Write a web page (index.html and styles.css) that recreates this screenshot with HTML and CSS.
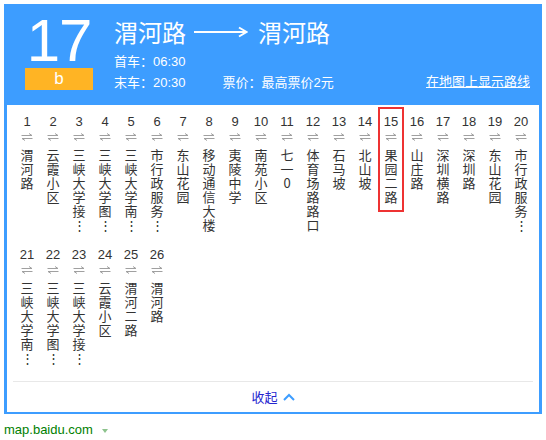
FILE: index.html
```html
<!DOCTYPE html>
<html lang="zh-CN">
<head>
<meta charset="utf-8">
<title>17路公交</title>
<link rel="stylesheet" href="styles.css">
</head>
<body>
<div class="card">
  <div class="head">
    <div class="line-no">
      <div class="num">17</div>
      <div class="badge">b</div>
    </div>
    <div class="info">
      <div class="title">
        <span>渭河路</span>
        <svg class="long-arrow" width="54" height="12" viewBox="0 0 54 12"><path d="M0 6H51" stroke="#fff" stroke-width="2" fill="none"/><path d="M45 1.5L52.5 6L45 10.5" stroke="#fff" stroke-width="2" fill="none"/></svg>
        <span>渭河路</span>
      </div>
      <div class="meta">首车<span class="colon">：</span>06:30</div>
      <div class="meta meta-row">
        <span>末车<span class="colon">：</span>20:30</span>
        <span class="price">票价<span class="colon">：</span>最高票价2元</span>
        <a class="maplink" href="#">在地图上显示路线</a>
      </div>
    </div>
  </div>
  <div class="body">
    <ul class="stops">
      <li class="stop"><span class="no">1</span><svg class="dir" width="12" height="8" viewBox="0 0 12 8"><path d="M0.5 2.5H11L8 0.5M11.5 5.5H1L4 7.5" stroke="#a0a0a0" stroke-width="1" fill="none"/></svg><span class="name">渭河路</span></li>
      <li class="stop"><span class="no">2</span><svg class="dir" width="12" height="8" viewBox="0 0 12 8"><path d="M0.5 2.5H11L8 0.5M11.5 5.5H1L4 7.5" stroke="#a0a0a0" stroke-width="1" fill="none"/></svg><span class="name">云霞小区</span></li>
      <li class="stop"><span class="no">3</span><svg class="dir" width="12" height="8" viewBox="0 0 12 8"><path d="M0.5 2.5H11L8 0.5M11.5 5.5H1L4 7.5" stroke="#a0a0a0" stroke-width="1" fill="none"/></svg><span class="name">三峡大学接⋮</span></li>
      <li class="stop"><span class="no">4</span><svg class="dir" width="12" height="8" viewBox="0 0 12 8"><path d="M0.5 2.5H11L8 0.5M11.5 5.5H1L4 7.5" stroke="#a0a0a0" stroke-width="1" fill="none"/></svg><span class="name">三峡大学图⋮</span></li>
      <li class="stop"><span class="no">5</span><svg class="dir" width="12" height="8" viewBox="0 0 12 8"><path d="M0.5 2.5H11L8 0.5M11.5 5.5H1L4 7.5" stroke="#a0a0a0" stroke-width="1" fill="none"/></svg><span class="name">三峡大学南⋮</span></li>
      <li class="stop"><span class="no">6</span><svg class="dir" width="12" height="8" viewBox="0 0 12 8"><path d="M0.5 2.5H11L8 0.5M11.5 5.5H1L4 7.5" stroke="#a0a0a0" stroke-width="1" fill="none"/></svg><span class="name">市行政服务⋮</span></li>
      <li class="stop"><span class="no">7</span><svg class="dir" width="12" height="8" viewBox="0 0 12 8"><path d="M0.5 2.5H11L8 0.5M11.5 5.5H1L4 7.5" stroke="#a0a0a0" stroke-width="1" fill="none"/></svg><span class="name">东山花园</span></li>
      <li class="stop"><span class="no">8</span><svg class="dir" width="12" height="8" viewBox="0 0 12 8"><path d="M0.5 2.5H11L8 0.5M11.5 5.5H1L4 7.5" stroke="#a0a0a0" stroke-width="1" fill="none"/></svg><span class="name">移动通信大楼</span></li>
      <li class="stop"><span class="no">9</span><svg class="dir" width="12" height="8" viewBox="0 0 12 8"><path d="M0.5 2.5H11L8 0.5M11.5 5.5H1L4 7.5" stroke="#a0a0a0" stroke-width="1" fill="none"/></svg><span class="name">夷陵中学</span></li>
      <li class="stop"><span class="no">10</span><svg class="dir" width="12" height="8" viewBox="0 0 12 8"><path d="M0.5 2.5H11L8 0.5M11.5 5.5H1L4 7.5" stroke="#a0a0a0" stroke-width="1" fill="none"/></svg><span class="name">南苑小区</span></li>
      <li class="stop"><span class="no">11</span><svg class="dir" width="12" height="8" viewBox="0 0 12 8"><path d="M0.5 2.5H11L8 0.5M11.5 5.5H1L4 7.5" stroke="#a0a0a0" stroke-width="1" fill="none"/></svg><span class="name">七一0</span></li>
      <li class="stop"><span class="no">12</span><svg class="dir" width="12" height="8" viewBox="0 0 12 8"><path d="M0.5 2.5H11L8 0.5M11.5 5.5H1L4 7.5" stroke="#a0a0a0" stroke-width="1" fill="none"/></svg><span class="name">体育场路路口</span></li>
      <li class="stop"><span class="no">13</span><svg class="dir" width="12" height="8" viewBox="0 0 12 8"><path d="M0.5 2.5H11L8 0.5M11.5 5.5H1L4 7.5" stroke="#a0a0a0" stroke-width="1" fill="none"/></svg><span class="name">石马坡</span></li>
      <li class="stop"><span class="no">14</span><svg class="dir" width="12" height="8" viewBox="0 0 12 8"><path d="M0.5 2.5H11L8 0.5M11.5 5.5H1L4 7.5" stroke="#a0a0a0" stroke-width="1" fill="none"/></svg><span class="name">北山坡</span></li>
      <li class="stop current"><span class="no">15</span><svg class="dir" width="12" height="8" viewBox="0 0 12 8"><path d="M0.5 2.5H11L8 0.5M11.5 5.5H1L4 7.5" stroke="#a0a0a0" stroke-width="1" fill="none"/></svg><span class="name">果园二路</span></li>
      <li class="stop"><span class="no">16</span><svg class="dir" width="12" height="8" viewBox="0 0 12 8"><path d="M0.5 2.5H11L8 0.5M11.5 5.5H1L4 7.5" stroke="#a0a0a0" stroke-width="1" fill="none"/></svg><span class="name">山庄路</span></li>
      <li class="stop"><span class="no">17</span><svg class="dir" width="12" height="8" viewBox="0 0 12 8"><path d="M0.5 2.5H11L8 0.5M11.5 5.5H1L4 7.5" stroke="#a0a0a0" stroke-width="1" fill="none"/></svg><span class="name">深圳横路</span></li>
      <li class="stop"><span class="no">18</span><svg class="dir" width="12" height="8" viewBox="0 0 12 8"><path d="M0.5 2.5H11L8 0.5M11.5 5.5H1L4 7.5" stroke="#a0a0a0" stroke-width="1" fill="none"/></svg><span class="name">深圳路</span></li>
      <li class="stop"><span class="no">19</span><svg class="dir" width="12" height="8" viewBox="0 0 12 8"><path d="M0.5 2.5H11L8 0.5M11.5 5.5H1L4 7.5" stroke="#a0a0a0" stroke-width="1" fill="none"/></svg><span class="name">东山花园</span></li>
      <li class="stop"><span class="no">20</span><svg class="dir" width="12" height="8" viewBox="0 0 12 8"><path d="M0.5 2.5H11L8 0.5M11.5 5.5H1L4 7.5" stroke="#a0a0a0" stroke-width="1" fill="none"/></svg><span class="name">市行政服务⋮</span></li>
      <li class="stop"><span class="no">21</span><svg class="dir" width="12" height="8" viewBox="0 0 12 8"><path d="M0.5 2.5H11L8 0.5M11.5 5.5H1L4 7.5" stroke="#a0a0a0" stroke-width="1" fill="none"/></svg><span class="name">三峡大学南⋮</span></li>
      <li class="stop"><span class="no">22</span><svg class="dir" width="12" height="8" viewBox="0 0 12 8"><path d="M0.5 2.5H11L8 0.5M11.5 5.5H1L4 7.5" stroke="#a0a0a0" stroke-width="1" fill="none"/></svg><span class="name">三峡大学图⋮</span></li>
      <li class="stop"><span class="no">23</span><svg class="dir" width="12" height="8" viewBox="0 0 12 8"><path d="M0.5 2.5H11L8 0.5M11.5 5.5H1L4 7.5" stroke="#a0a0a0" stroke-width="1" fill="none"/></svg><span class="name">三峡大学接⋮</span></li>
      <li class="stop"><span class="no">24</span><svg class="dir" width="12" height="8" viewBox="0 0 12 8"><path d="M0.5 2.5H11L8 0.5M11.5 5.5H1L4 7.5" stroke="#a0a0a0" stroke-width="1" fill="none"/></svg><span class="name">云霞小区</span></li>
      <li class="stop"><span class="no">25</span><svg class="dir" width="12" height="8" viewBox="0 0 12 8"><path d="M0.5 2.5H11L8 0.5M11.5 5.5H1L4 7.5" stroke="#a0a0a0" stroke-width="1" fill="none"/></svg><span class="name">渭河二路</span></li>
      <li class="stop"><span class="no">26</span><svg class="dir" width="12" height="8" viewBox="0 0 12 8"><path d="M0.5 2.5H11L8 0.5M11.5 5.5H1L4 7.5" stroke="#a0a0a0" stroke-width="1" fill="none"/></svg><span class="name">渭河路</span></li>
    </ul>
    <div class="fold"><a class="fold-link" href="#">收起<svg class="chev" width="12" height="8" viewBox="0 0 12 8"><path d="M1 7L6 2L11 7" stroke="#3d9dff" stroke-width="2" fill="none"/></svg></a></div>
  </div>
</div>
<div class="source"><span class="domain">map.baidu.com</span><span class="caret"></span></div>
</body>
</html>
```
FILE: styles.css
```css
body {
  margin: 4px;
  font-family: "Liberation Sans", "Noto Sans CJK SC", sans-serif;
  background: #fff;
}
.card {
  width: 538px;
  height: 410px;
  box-sizing: border-box;
  border: 3px solid #3d9dff;
  border-bottom-width: 2px;
  background: #fff;
}
.head {
  background: #3d9dff;
  height: 98px;
  box-sizing: border-box;
  padding: 6px 9px 0 18px;
  display: flex;
  color: #fff;
}
.line-no {
  width: 68px;
  flex: none;
  display: flex;
  flex-direction: column;
}
.num {
  font-size: 60px;
  line-height: 55px;
  height: 55px;
  text-align: center;
  color: #fff;
  letter-spacing: -1px;
}
.badge {
  height: 22px;
  background: #ffb424;
  color: #fff;
  font-size: 17px;
  line-height: 22px;
  text-align: center;
}
.info {
  flex: 1;
  margin-left: 21px;
  margin-top: 4px;
}
.title {
  display: flex;
  align-items: center;
  font-family: "Noto Sans CJK SC", sans-serif;
  font-size: 24px;
  line-height: 30px;
  height: 30px;
}
.long-arrow {
  margin: 0 10px 0 8px;
}
.meta {
  font-family: "Liberation Sans", "Noto Sans CJK SC", sans-serif;
  font-size: 13px;
  line-height: 20px;
}
.colon {
  font-family: "Noto Sans CJK JP", sans-serif;
}
.title + .meta {
  margin-top: 4px;
}
.meta-row {
  display: flex;
}
.price {
  margin-left: 37px;
}
.maplink {
  margin-left: auto;
  color: #fff;
  text-decoration: underline;
}
.body {
  background: #fff;
}
.stops {
  list-style: none;
  margin: 0;
  padding: 2px 0 8px 7px;
  display: flex;
  flex-wrap: wrap;
  align-items: flex-start;
}
.stop {
  width: 26px;
  box-sizing: border-box;
  border: 2px solid transparent;
  padding: 5px 0 6px;
  display: flex;
  flex-direction: column;
  align-items: center;
  color: #333;
  min-height: 133px;
}
.stop.current {
  border-color: #ee3232;
  min-height: 0;
}
.no {
  font-size: 13px;
  line-height: 15px;
  height: 15px;
}
.dir {
  display: block;
  margin-top: 4px;
  height: 8px;
}
.name {
  display: block;
  width: 13px;
  margin-top: 7px;
  font-family: "Noto Sans CJK SC", sans-serif;
  font-size: 13px;
  line-height: 14px;
  word-break: break-all;
  text-align: center;
}
.fold {
  margin: 0 6px;
  border-top: 1px solid #e8e8e8;
  height: 29px;
  display: flex;
  justify-content: center;
  align-items: center;
}
.fold-link {
  color: #2626cf;
  text-decoration: none;
  font-family: "Noto Sans CJK SC", sans-serif;
  font-size: 13px;
  line-height: 29px;
  display: flex;
  align-items: center;
}
.chev {
  margin-left: 5px;
}
.source {
  margin-top: 8px;
  display: flex;
  align-items: center;
  font-size: 13px;
  line-height: 15px;
}
.domain {
  color: #008000;
}
.caret {
  margin-left: 9px;
  margin-top: 2px;
  width: 0;
  height: 0;
  border-left: 3.5px solid transparent;
  border-right: 3.5px solid transparent;
  border-top: 4px solid #8dc38d;
}
```
